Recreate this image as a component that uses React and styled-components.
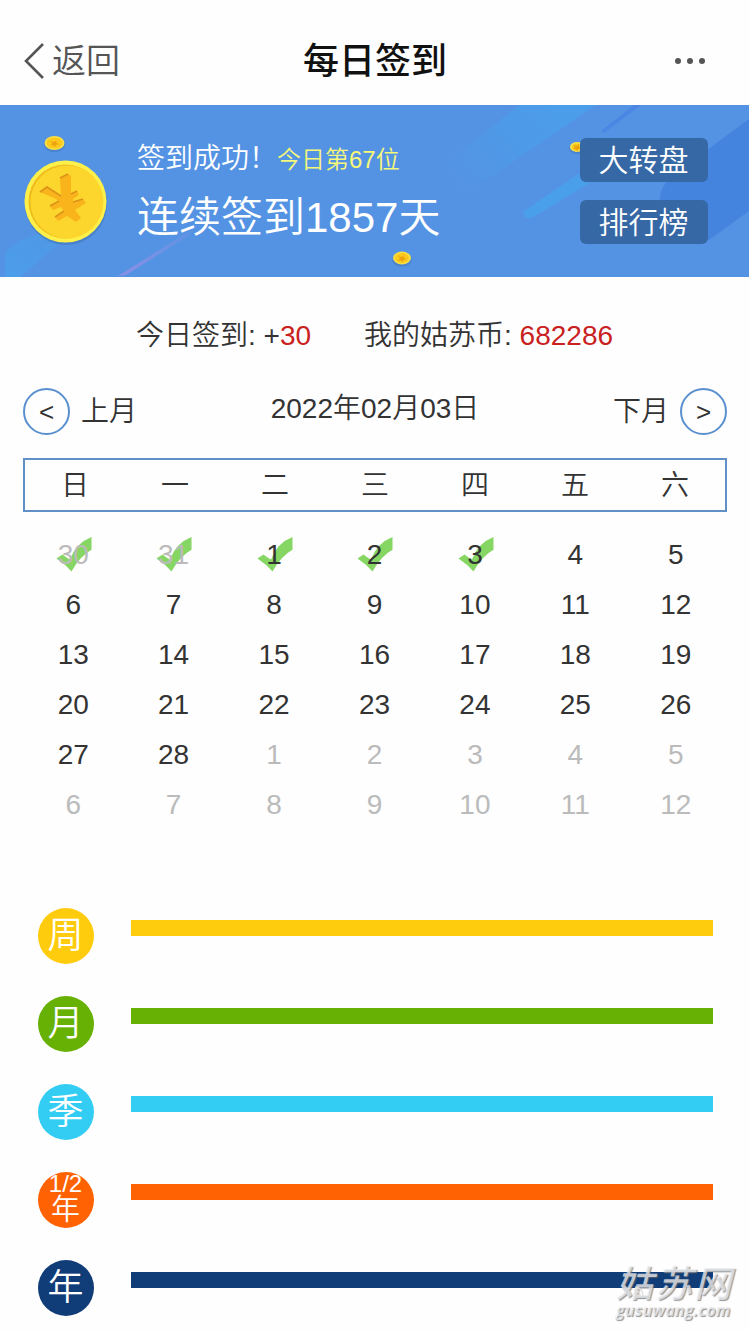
import React from 'react';
import styled, { createGlobalStyle } from 'styled-components';

const weekdays = ['日', '一', '二', '三', '四', '五', '六'];

// previous month tail, February, then the days that follow
const days = [
  { day: 30, muted: true, signed: true },
  { day: 31, muted: true, signed: true },
  ...Array.from({ length: 28 }, (_, i) => ({ day: i + 1, signed: i < 3 })),
  ...Array.from({ length: 12 }, (_, i) => ({ day: i + 1, muted: true })),
];

const periods = [
  { id: 'week', label: '周', color: '#ffcc0d' },
  { id: 'month', label: '月', color: '#66b104' },
  { id: 'season', label: '季', color: '#33cdf3' },
  { id: 'half', label: '年', top: '1/2', color: '#ff6203' },
  { id: 'year', label: '年', color: '#103c78' },
];

const BannerArt = () => (
  <Art viewBox="0 0 749 172" aria-hidden="true">
    <defs>
      <linearGradient id="beam" gradientUnits="userSpaceOnUse" x1="455" y1="80" x2="560" y2="5">
        <stop offset="0" stopColor="#4a9feb" stopOpacity="0" />
        <stop offset="0.6" stopColor="#4a9feb" stopOpacity="0.6" />
        <stop offset="1" stopColor="#4a9feb" stopOpacity="0.85" />
      </linearGradient>
      <linearGradient id="streak" x1="0" y1="1" x2="1" y2="0">
        <stop offset="0" stopColor="#8b90e6" />
        <stop offset="1" stopColor="#8b90e6" stopOpacity="0.15" />
      </linearGradient>
      <linearGradient id="corner" x1="0" y1="1" x2="1" y2="0">
        <stop offset="0" stopColor="#4a9feb" stopOpacity="0.9" />
        <stop offset="1" stopColor="#4a9feb" stopOpacity="0" />
      </linearGradient>
      <linearGradient id="ray" x1="0" y1="1" x2="1" y2="0">
        <stop offset="0" stopColor="#4a9feb" />
        <stop offset="0.6" stopColor="#4a9feb" />
        <stop offset="1" stopColor="#4a9feb" stopOpacity="0" />
      </linearGradient>
    </defs>
    <path d="M440 62L520 0H596L450 100z" fill="url(#beam)" />
    <path d="M5 172V150Q10 138 34 130L100 104L62 136L20 172z" fill="url(#corner)" />
    <path d="M118 171L180 132L192 124L188 131L126 170z" fill="url(#streak)" />
    <path d="M524 106L580 68L640 30L622 58L532 113Q522 114 524 106z" fill="url(#ray)" />
    <path d="M601 26L634 0H641L604 28z" fill="#4c86e4" />
    <path d="M749 14L680 65Q655 82 661 102L692 139L709 135L749 106z" fill="#4484df" />
  </Art>
);

const TinyCoin = ({ x, y, rx = 9, ry = 6.5 }) => (
  <g transform={`translate(${x} ${y})`}>
    <ellipse cy="1.5" rx={rx + 0.8} ry={ry + 0.8} fill="#3c6fb4" opacity="0.4" />
    <ellipse rx={rx} ry={ry} fill="#f8df48" />
    <ellipse rx={rx - 2} ry={ry - 1.5} fill="#fbc81c" />
    <path d="M-4 -2L0 -1L2 -3L2 0L5 1L1 2L1 4L-2 2L-4 3L-2 0z" fill="#eda20f" />
  </g>
);

const Coins = () => (
  <Art viewBox="0 0 749 172" aria-hidden="true">
    <TinyCoin x={54.5} y={38} rx={10} ry={7} />
    <TinyCoin x={577} y={42} rx={7} ry={5} />
    <TinyCoin x={402} y={153} />
    <circle cx="66" cy="99" r="41" fill="#345f9c" opacity="0.35" />
    <circle cx="65.5" cy="96.5" r="41" fill="#fdf04b" />
    <circle cx="65.5" cy="96.5" r="37" fill="#eebc1d" />
    <circle cx="67" cy="97" r="36.5" fill="#fdd62d" />
    <path
      d="M40 87L47 82L61 91L60 73L68 69L71 71L71 89L77 86L79 90L73 94V97L83 94L86 98L75 105L81 113L76 117L67 111L58 116L55 112L64 106L61 102L53 105L50 101L59 96L54 93z"
      fill="#f9b31b"
    />
    <path
      d="M40 87L47 82L61 91 M60 73L68 69 M71 89L77 86 M73 97L83 94 M50 101L59 96 M55 112L64 106"
      fill="none"
      stroke="#dc931a"
      strokeWidth="1.6"
    />
  </Art>
);

const Check = () => (
  <CheckMark viewBox="0 0 36 35" aria-hidden="true">
    <path d="M0.5 21.5L6.5 17.5Q11 21 14 22.5Q20 6 35.5 0V12.8Q24 19 15.5 34.5Q9 27 0.5 21.5z" />
  </CheckMark>
);

const App = () => {
  return (
    <Page>
      <GlobalStyle />
      <Header>
        <Back>
          <svg width="20" height="36" viewBox="0 0 20 36">
            <path d="M19 1L2 18L19 35" fill="none" stroke="#555" strokeWidth="2.6" />
          </svg>
          返回
        </Back>
        <Title>每日签到</Title>
        <More>
          <i />
          <i />
          <i />
        </More>
      </Header>

      <Banner>
        <BannerArt />
        <Coins />
        <Message>
          <p className="result">
            签到成功！<span>今日第67位</span>
          </p>
          <p className="streak">连续签到1857天</p>
        </Message>
        <Links>
          <LinkButton>大转盘</LinkButton>
          <LinkButton>排行榜</LinkButton>
        </Links>
      </Banner>

      <Stats>
        <p>今日签到: +<b>30</b></p>
        <p>我的姑苏币: <b>682286</b></p>
      </Stats>

      <MonthNav>
        <MonthButton>
          <Round>&lt;</Round>
          上月
        </MonthButton>
        <CurrentDate>2022年02月03日</CurrentDate>
        <MonthButton>
          下月
          <Round>&gt;</Round>
        </MonthButton>
      </MonthNav>

      <Weekdays>
        {weekdays.map((name) => (
          <span key={name}>{name}</span>
        ))}
      </Weekdays>

      <Days>
        {days.map(({ day, muted, signed }, index) => (
          <Day key={index} $muted={muted}>
            {signed && <Check />}
            <span>{day}</span>
          </Day>
        ))}
      </Days>

      <Periods>
        {periods.map(({ id, label, top, color }) => (
          <Period key={id}>
            <Badge $color={color} $split={!!top}>
              {top && <small>{top}</small>}
              <span>{label}</span>
            </Badge>
            <Bar $color={color} />
          </Period>
        ))}
      </Periods>

      <Watermark>
        <strong>姑苏网</strong>
        <em>gusuwang.com</em>
        <svg width="12" height="12" viewBox="0 0 12 12" aria-hidden="true">
          <path d="M1 7Q4 7 4 11M1 4Q7 4 7 11M2 1Q10 2 10 10" fill="none" stroke="#ddd" strokeWidth="1.3" />
        </svg>
      </Watermark>
    </Page>
  );
};

const GlobalStyle = createGlobalStyle`
  * {
    box-sizing: border-box;
  }
  body {
    margin: 0;
    background: #fefefe;
  }
  p {
    margin: 0;
  }
`;

const Page = styled.div`
  position: relative;
  width: 750px;
  height: 1330px;
  overflow: hidden;
  color: #333;
  font-family: "Liberation Sans", "Noto Sans CJK SC", sans-serif;
  font-size: 28px;
  font-weight: 350;
  line-height: 40px;
`;

const Header = styled.header`
  display: grid;
  grid-template-columns: 1fr auto 1fr;
  align-items: center;
  height: 105px;
  padding: 17px 45px 0 25px;
`;

const Back = styled.div`
  display: flex;
  align-items: center;
  gap: 8px;
  margin-left: -1px;
  color: #555;
  font-size: 34px;
`;

const Title = styled.h1`
  margin: 1px 0 0 20px;
  color: #111;
  font-size: 36px;
  font-weight: 500;
`;

const More = styled.div`
  display: flex;
  justify-content: flex-end;
  gap: 6px;
  i {
    width: 6px;
    height: 6px;
    border-radius: 50%;
    background: #555;
  }
`;

const Banner = styled.section`
  position: relative;
  display: flex;
  justify-content: space-between;
  width: 749px;
  height: 172px;
  padding: 33px 41px 0 137px;
  background: #5493e3;
  color: #fff;
`;

const Art = styled.svg`
  position: absolute;
  top: 0;
  left: 0;
  width: 749px;
  height: 172px;
`;

const Message = styled.div`
  position: relative;
  padding-top: 1px;
  .result {
    line-height: 40px;
    span {
      color: #f7f77a;
      font-size: 24px;
    }
  }
  .streak {
    margin-top: 8px;
    font-size: 42px;
    line-height: 60px;
  }
`;

const Links = styled.div`
  position: relative;
  display: flex;
  flex-direction: column;
  gap: 18px;
`;

const LinkButton = styled.button`
  width: 128px;
  height: 44px;
  padding: 0 1px 0 0;
  border: none;
  border-radius: 6px;
  background: #3768a6;
  color: #fff;
  font-family: inherit;
  font-size: 30px;
  font-weight: 350;
  line-height: 45px;
`;

const Stats = styled.section`
  display: flex;
  justify-content: center;
  gap: 53px;
  padding: 39px 1px 0 0;
  b {
    color: #c9211e;
    font-weight: 400;
  }
`;

const MonthNav = styled.nav`
  display: flex;
  justify-content: space-between;
  align-items: center;
  height: 47px;
  margin: 32px 23px 0;
`;

const MonthButton = styled.div`
  display: flex;
  align-items: center;
  gap: 11px;
`;

const Round = styled.span`
  width: 47px;
  height: 47px;
  border: 2px solid #5b90cf;
  border-radius: 50%;
  font-size: 26px;
  line-height: 44px;
  text-align: center;
`;

const CurrentDate = styled.div`
  margin-bottom: 5px;
`;

const Weekdays = styled.div`
  display: grid;
  grid-template-columns: repeat(7, 1fr);
  height: 54px;
  margin: 23px 23px 0;
  border: 2px solid #6190c6;
  line-height: 52px;
  text-align: center;
`;

const Days = styled.div`
  display: grid;
  grid-template-columns: repeat(7, 1fr);
  grid-auto-rows: 50px;
  margin: 17px 24px 0 23px;
`;

const Day = styled.div`
  position: relative;
  color: ${({ $muted }) => ($muted ? '#bbb' : '#333')};
  line-height: 52px;
  text-align: center;
  span {
    position: relative;
  }
`;

const CheckMark = styled.svg`
  position: absolute;
  top: 8px;
  left: 33px;
  width: 36px;
  height: 35px;
  fill: #85d663;
`;

const Periods = styled.section`
  display: flex;
  flex-direction: column;
  gap: 32px;
  padding: 79px 37px 0 38px;
`;

const Period = styled.div`
  display: flex;
  gap: 37px;
`;

const Badge = styled.div`
  display: flex;
  flex-direction: column;
  align-items: center;
  width: 56px;
  height: 56px;
  padding-right: 1px;
  border-radius: 50%;
  background: ${({ $color }) => $color};
  color: #fff;
  font-size: ${({ $split }) => ($split ? '29px' : '36px')};
  line-height: ${({ $split }) => ($split ? '28px' : '56px')};
  small {
    font-size: 24px;
    line-height: 24px;
  }
`;

const Bar = styled.div`
  flex: 1;
  height: 16px;
  margin-top: 12px;
  background: ${({ $color }) => $color};
`;

const Watermark = styled.div`
  position: absolute;
  left: 616px;
  bottom: 12px;
  display: flex;
  flex-direction: column;
  color: rgba(235, 238, 242, 0.75);
  font-style: italic;
  text-shadow: 1px 1px 1px rgba(110, 110, 110, 0.75);
  strong {
    font-size: 37px;
    font-weight: 500;
    letter-spacing: 2px;
    line-height: 35px;
  }
  em {
    font-family: "Open Sans", sans-serif;
    font-size: 16px;
    font-weight: 700;
    letter-spacing: 0.2px;
    line-height: 16px;
  }
  svg {
    position: absolute;
    top: 19px;
    left: 17px;
  }
`;

export default App;
